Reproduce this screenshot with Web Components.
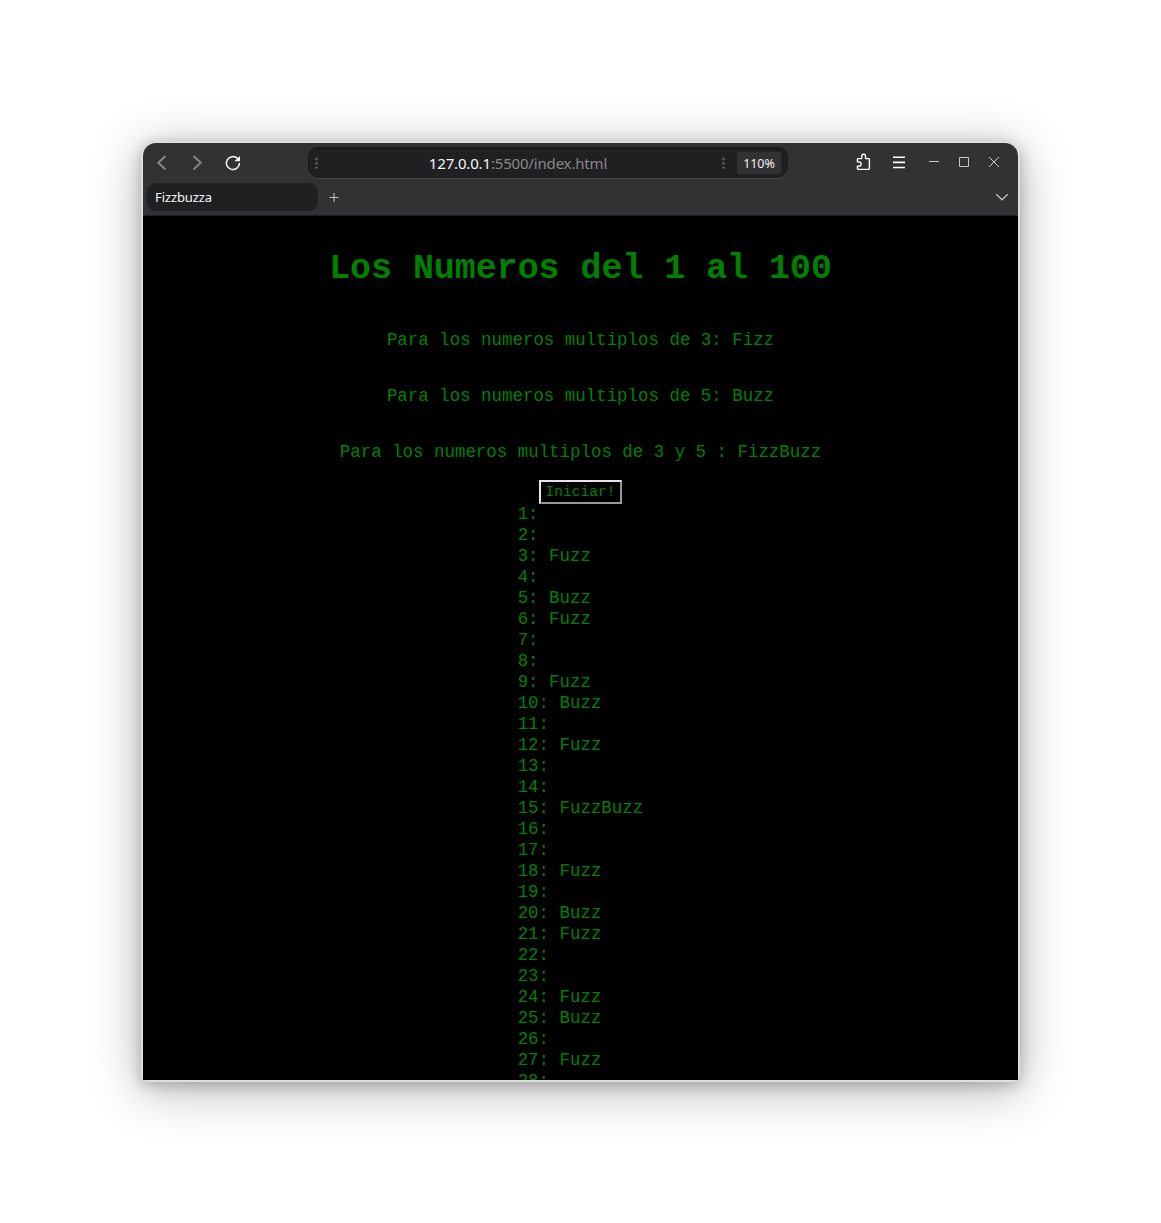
<!DOCTYPE html>
<html lang="es">
<head>
<meta charset="utf-8">
<title>Fizzbuzza</title>
<style>
html,body{margin:0;height:100%;background:#fff;overflow:hidden}
body{box-sizing:border-box;height:1223px;padding:143px}
</style>
</head>
<body>
<browser-window>
  <browser-toolbar slot="chrome"></browser-toolbar>
  <tab-strip slot="chrome">Fizzbuzza</tab-strip>
  <fizz-page></fizz-page>
</browser-window>
<script>
function define(name, html, setup) {
  customElements.define(name, class extends HTMLElement {
    constructor() {
      super();
      this.attachShadow({mode: 'open'}).innerHTML = html;
      if (setup) setup(this.shadowRoot);
    }
  });
}

define('browser-window', `
<style>
:host{display:flex;flex-direction:column;width:875px;height:937px;border-radius:13px 13px 6px 6px;
 box-shadow:0 0 0 2px #dededc,0 3px 14px 2px rgba(0,0,0,.22),0 8px 48px 4px rgba(0,0,0,.28)}
header{flex:none;height:73px;box-sizing:border-box;background:#323234;border-bottom:1px solid #1d1d1e;border-radius:13px 13px 0 0;
 font-family:"Noto Sans",sans-serif}
main{flex:1;min-height:0;overflow:hidden;background:#000}
</style>
<header><slot name="chrome"></slot></header><main><slot></slot></main>`);

define('browser-toolbar', `
<style>
:host{display:flex;align-items:flex-start;height:40px}
svg{display:block;flex:none}
.nav{width:165px;height:40px}
.url{box-sizing:border-box;width:480px;height:31px;margin-top:4px;border-radius:11px;background:#202022;
 box-shadow:inset 0 2px 1px #19191b,inset 1px 0 1px #19191b,0 1px 0 #48484a;display:flex;align-items:center;color:#87878a;font-size:15px}
.addr{flex:1;text-align:center;line-height:32px;white-space:nowrap;letter-spacing:-.17px}
.addr b{font-weight:400;color:#f5f5f5}
.zoom{width:44px;height:22px;border-radius:3px;background:#323234;color:#f0f0f0;font-size:12.5px;letter-spacing:-.1px;line-height:23px;text-align:center;margin:1px 7px 0 9px}
.ctl{width:230px;height:40px}
</style>
<svg class="nav" viewBox="0 0 165 40" fill="none">
 <path d="M22.5 13 15.3 19.7 22.5 26.4M50.5 13 57.7 19.7 50.5 26.4" stroke="#858587" stroke-width="2"/>
 <path d="M94.6 15.6A6.5 6.5 0 1 0 96.4 20" stroke="#fff" stroke-width="1.5"/>
 <path d="M97 13V18.3H91.5Z" fill="#fff"/>
</svg>
<div class="url">
 <svg width="17" height="32" fill="#5a5a5d"><circle cx="8.5" cy="12" r="1.4"/><circle cx="8.5" cy="16.3" r="1.4"/><circle cx="8.5" cy="20.6" r="1.4"/></svg>
 <div class="addr"><b>127.0.0.1</b>:5500/index.html</div>
 <svg width="17" height="32" fill="#5a5a5d"><circle cx="12.5" cy="12" r="1.4"/><circle cx="12.5" cy="16.3" r="1.4"/><circle cx="12.5" cy="20.6" r="1.4"/></svg>
 <div class="zoom">110%</div>
</div>
<svg class="ctl" viewBox="0 0 230 40" fill="none">
 <path d="M70.2 15.6H73.7V13.1A1.9 1.9 0 0 1 77.5 13.1V15.6H80.6Q81.4 15.6 81.4 16.4V25.5Q81.4 26.3 80.6 26.3H70.2Q69.4 26.3 69.4 25.5V23.2H71A1.9 1.9 0 0 0 71 18.9H69.4V16.4Q69.4 15.6 70.2 15.6Z" stroke="#fff" stroke-width="1.35" stroke-linejoin="round"/>
 <path d="M105 14.3h12M105 19.4h12M105 24.5h12" stroke="#fff" stroke-width="1.6"/>
 <path d="M141 18.5h10M171.5 14.5h9v9h-9ZM201 14l10 10M211 14l-10 10" stroke="#c9c9cb" stroke-width="1"/>
</svg>`);

define('tab-strip', `
<style>
:host{display:flex;align-items:flex-start;height:32px}
.tab{box-sizing:border-box;width:171px;height:28px;margin-left:4px;padding-left:8px;border-radius:9px;background:#202022;color:#f5f5f5;font-size:13px;letter-spacing:-.1px;line-height:28px}
svg{display:block}
</style>
<div class="tab"><slot></slot></div>
<svg width="700" height="32" fill="none" stroke="#c0c0c2"><path d="M11.5 14.5h9M16 10v9" stroke-width="1.1"/><path d="M678.3 11.2 684 16.8 689.7 11.2" stroke-width="1.3"/></svg>`);

define('fizz-page', `
<style>
:host{display:flex;flex-direction:column;align-items:center;color:#008000;font:17.46px/21px "Liberation Mono",monospace}
h1{font-size:34.92px;line-height:40px;margin:33px 0 41px}
p{margin:0 0 35px;white-space:pre}
p:last-of-type{margin-bottom:17px}
button{box-sizing:border-box;width:83px;height:24px;padding:0;background:#000;color:inherit;font:14.55px/18px "Liberation Mono",monospace;border:2px solid;border-color:#e6e6ea #98989b #98989b #e6e6ea}
ol{list-style:none;margin:0;padding:0;width:125.7px;white-space:pre}
li{height:21px}
</style>
<h1>Los Numeros del 1 al 100</h1>
<p>Para los numeros multiplos de 3: Fizz</p>
<p>Para los numeros multiplos de 5: Buzz</p>
<p>Para los numeros multiplos de 3 y 5 : FizzBuzz</p>
<button>Iniciar!</button>
<ol></ol>`, root => {
  const list = root.querySelector('ol');
  for (let n = 1; n <= 28; n++) {
    const li = document.createElement('li');
    li.textContent = n + ': ' + (n % 3 ? '' : 'Fuzz') + (n % 5 ? '' : 'Buzz');
    list.append(li);
  }
});
</script>
</body>
</html>
